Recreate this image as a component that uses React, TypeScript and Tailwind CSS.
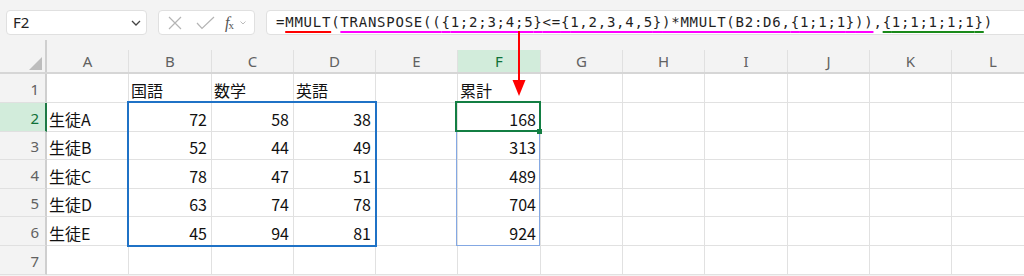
import React from "react";

const cols = [
  { l: "A", w: "w-[82px]" },
  { l: "B", w: "w-[83px]" },
  { l: "C", w: "w-[82px]" },
  { l: "D", w: "w-[82px]" },
  { l: "E", w: "w-[82px]" },
  { l: "F", w: "w-[83px]" },
  { l: "G", w: "w-[82px]" },
  { l: "H", w: "w-[82px]" },
  { l: "I", w: "w-[83px]" },
  { l: "J", w: "w-[82px]" },
  { l: "K", w: "w-[82px]" },
  { l: "L", w: "w-[83px]" },
];

const rowHeights = ["h-[29px]", "h-[29px]", "h-[28px]", "h-[29px]", "h-[28px]", "h-[29px]", "h-[29px]"];

type Cell = { t: string; align: "l" | "r" } | null;

const data: Cell[][] = [
  [null, { t: "国語", align: "l" }, { t: "数学", align: "l" }, { t: "英語", align: "l" }, null, { t: "累計", align: "l" }],
  [{ t: "生徒A", align: "l" }, { t: "72", align: "r" }, { t: "58", align: "r" }, { t: "38", align: "r" }, null, { t: "168", align: "r" }],
  [{ t: "生徒B", align: "l" }, { t: "52", align: "r" }, { t: "44", align: "r" }, { t: "49", align: "r" }, null, { t: "313", align: "r" }],
  [{ t: "生徒C", align: "l" }, { t: "78", align: "r" }, { t: "47", align: "r" }, { t: "51", align: "r" }, null, { t: "489", align: "r" }],
  [{ t: "生徒D", align: "l" }, { t: "63", align: "r" }, { t: "74", align: "r" }, { t: "78", align: "r" }, null, { t: "704", align: "r" }],
  [{ t: "生徒E", align: "l" }, { t: "45", align: "r" }, { t: "94", align: "r" }, { t: "81", align: "r" }, null, { t: "924", align: "r" }],
  [],
];

export default function App() {
  return (
    <div
      className="relative w-[1024px] h-[276px] overflow-hidden bg-[#f3f3f3]"
      style={{ fontFamily: '"Noto Sans", "Noto Sans CJK JP", sans-serif' }}
    >
      {/* Toolbar */}
      <div className="flex items-start pt-[10px] pl-[6px] h-[40px]">
        <div className="shrink-0 flex items-center justify-between w-[141px] h-[25px] rounded-[4px] border border-[#e0e0e0] bg-white pl-[6px] pr-[5px]">
          <span className="text-[15px] text-[#222]">F2</span>
          <svg width="10" height="6" viewBox="0 0 10 6">
            <polyline points="1,1 5,5 9,1" fill="none" stroke="#444" strokeWidth="1.3" />
          </svg>
        </div>
        <div className="shrink-0 ml-[11px] flex items-center w-[97px] h-[25px] rounded-[4px] border border-[#e0e0e0] bg-white">
          <svg width="16" height="16" viewBox="0 0 16 16" className="ml-[8px]">
            <path d="M2 2 L14 14 M14 2 L2 14" stroke="#b4b4b4" strokeWidth="1.2" fill="none" />
          </svg>
          <svg width="19" height="14" viewBox="0 0 19 14" className="ml-[13px]">
            <polyline points="1,7 6,12.5 18,1" stroke="#b4b4b4" strokeWidth="1.2" fill="none" />
          </svg>
          <span className="ml-[10px] flex items-end text-[#555] leading-none">
            <span className="italic text-[16px]" style={{ fontFamily: '"Liberation Serif", serif' }}>f</span>
            <span className="text-[11px] -ml-[1px]" style={{ fontFamily: '"Liberation Serif", serif' }}>x</span>
          </span>
          <svg width="6" height="4" viewBox="0 0 6 4" className="ml-[6px] mt-[1px]">
            <polyline points="0.5,0.5 3,3 5.5,0.5" fill="none" stroke="#bbb" strokeWidth="1" />
          </svg>
        </div>
        <div className="shrink-0 ml-[11px] flex items-center w-[780px] h-[25px] rounded-l-[4px] border border-[#e0e0e0] bg-white pl-[9px]">
          <span
            className="text-[14px] text-[#1f1f1f] whitespace-nowrap tracking-[0.76px]"
            style={{ fontFamily: '"DejaVu Sans Mono", monospace' }}
          >
            =<span className="underline decoration-[#ff0000] decoration-2 underline-offset-[4px]">MMULT</span>(
            <span className="underline decoration-[#ff00ff] decoration-2 underline-offset-[4px]">
              TRANSPOSE(({"{"}1;2;3;4;5{"}"}&lt;={"{"}1,2,3,4,5{"}"})*MMULT(B2:D6,{"{"}1;1;1{"}"}))
            </span>
            ,<span className="underline decoration-[#1a8a1a] decoration-2 underline-offset-[4px]">{"{"}1;1;1;1;1{"}"}</span>)
          </span>
        </div>
      </div>

      {/* Grid */}
      <div className="flex flex-col">
        {/* Column headers */}
        <div className="flex h-[34px] border-b-2 border-[#d6d6d6]">
          <div className="relative shrink-0 w-[47px] h-full border-r-2 border-[#cfcfcf]">
            <svg width="13" height="13" viewBox="0 0 13 13" className="absolute right-[3px] bottom-[2px]">
              <polygon points="13,0 13,13 0,13" fill="#bdbdbd" />
            </svg>
          </div>
          {cols.map((c) => (
            <div key={c.l} className={`${c.w} shrink-0 h-full flex flex-col justify-end`}>
              <div
                className={
                  c.l === "F"
                    ? "h-[22px] flex items-center justify-center bg-[#d2ecdb] text-[#0f7138] text-[15px] border-r border-[#e0e0e0]"
                    : "h-[22px] flex items-center justify-center text-[#616161] text-[15px] border-r border-[#e0e0e0]"
                }
              >
                {c.l}
              </div>
            </div>
          ))}
        </div>
        {/* Rows */}
        {rowHeights.map((h, r) => (
          <div key={r} className={`flex ${h}`}>
            <div
              className={
                r === 1
                  ? "w-[47px] shrink-0 flex items-center justify-end pr-[6px] pt-[2px] bg-[#d2ecdb] text-[#0f7138] text-[15px] border-r-2 border-r-[#1e7a45] border-b border-b-[#e0e0e0]"
                  : "w-[47px] shrink-0 flex items-center justify-end pr-[6px] pt-[2px] text-[#616161] text-[15px] border-r-2 border-r-[#cfcfcf] border-b border-b-[#e0e0e0]"
              }
            >
              {r + 1}
            </div>
            {cols.map((c, ci) => {
              const cell = data[r] ? data[r][ci] : null;
              return (
                <div
                  key={c.l}
                  className={`${c.w} shrink-0 bg-white border-r border-b border-[#e1e1e1] flex items-center pt-[3px] text-[16px] text-[#111] ${
                    cell && cell.align === "r" ? "justify-end pr-[4px]" : "justify-start pl-[2px]"
                  }`}
                  style={{ fontFamily: '"Noto Sans CJK JP", sans-serif' }}
                >
                  {cell ? cell.t : ""}
                </div>
              );
            })}
          </div>
        ))}
      </div>

      {/* Selection overlays */}
      <div className="absolute left-[127px] top-[101px] w-[250px] h-[146px] border-2 border-[#1f72c6] pointer-events-none" />
      <div className="absolute left-[456px] top-[131px] w-[84px] h-[115px] border-[1.5px] border-[#84a8e3] pointer-events-none" />
      <div className="absolute left-[455px] top-[101px] w-[86px] h-[31px] border-2 border-[#137e43] pointer-events-none" />
      <div className="absolute left-[537px] top-[129px] w-[5px] h-[5px] bg-[#137e43] pointer-events-none" />

      {/* Red arrow */}
      <svg className="absolute left-0 top-0 pointer-events-none" width="1024" height="276">
        <line x1="519" y1="31" x2="519" y2="82" stroke="#ff0000" strokeWidth="2" />
        <polygon points="512.5,80 525.5,80 519,96" fill="#ff0000" />
      </svg>
    </div>
  );
}
